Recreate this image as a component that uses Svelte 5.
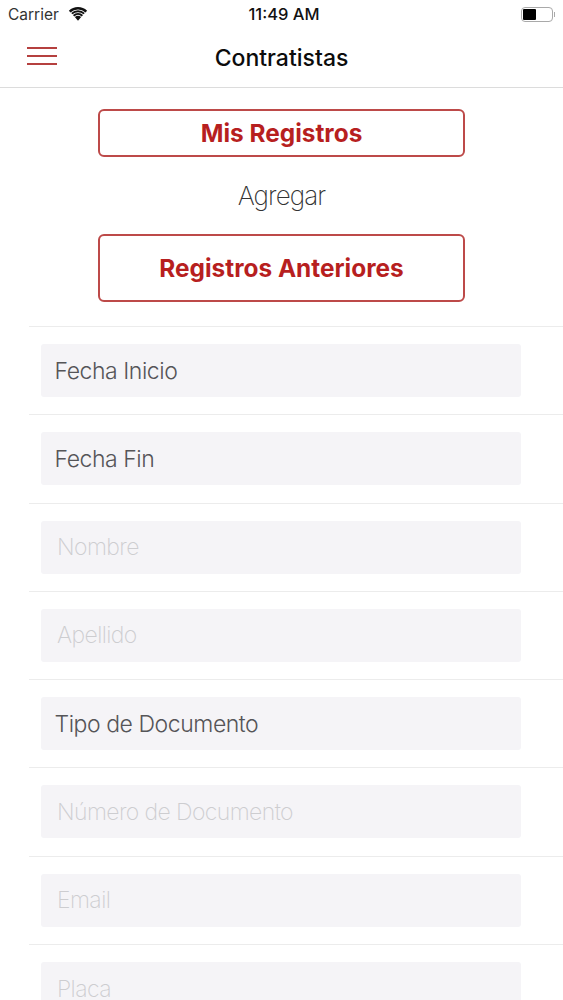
<script>
    const fields = [
        { label: 'Fecha Inicio', filled: true },
        { label: 'Fecha Fin', filled: true },
        { label: 'Nombre', filled: false },
        { label: 'Apellido', filled: false },
        { label: 'Tipo de Documento', filled: true },
        { label: 'Número de Documento', filled: false },
        { label: 'Email', filled: false },
        { label: 'Placa', filled: false }
    ];
</script>

<div class="screen">
    <div class="status">
        <div class="carrier">
            <span>Carrier</span>
            <svg width="20" height="14" viewBox="0 0 20 15">
                <path d="M10 14.8 L6.6 10.8 A5.2 5.2 0 0 1 13.4 10.8 Z" fill="#111" />
                <path d="M4.6 8.6 A8 8 0 0 1 15.4 8.6 L14 10.1 A6 6 0 0 0 6 10.1 Z" fill="#111" />
                <path d="M0.2 3.9 A14.3 14.3 0 0 1 19.8 3.9 L18 5.9 A11.6 11.6 0 0 0 2 5.9 Z" fill="#111" />
                <path d="M2.7 6.4 A10.8 10.8 0 0 1 17.3 6.4 L15.9 7.9 A8.8 8.8 0 0 0 4.1 7.9 Z" fill="#111" />
            </svg>
        </div>
        <div class="time">11:49 AM</div>
        <div class="battery">
            <div class="battery-body"><div class="battery-level"></div></div>
            <div class="battery-tip"></div>
        </div>
    </div>

    <header class="nav">
        <div class="burger">
            <span></span>
            <span></span>
            <span></span>
        </div>
        <div class="title">Contratistas</div>
    </header>

    <div class="actions">
        <button class="btn small">Mis Registros</button>
        <div class="add">Agregar</div>
        <button class="btn large">Registros Anteriores</button>
    </div>

    <div class="form">
        {#each fields as field}
            <div class="row">
                <div class={`field ${field.filled ? 'filled' : 'empty'}`}>{field.label}</div>
            </div>
        {/each}
    </div>
</div>

<style>
    :global(body) {
        margin: 0;
        background: #fff;
    }

    .screen {
        width: 563px;
        height: 1000px;
        overflow: hidden;
        background: #fff;
        font-family: Inter, "Liberation Sans", sans-serif;
    }

    .status {
        height: 28px;
        display: grid;
        grid-template-columns: 1fr auto 1fr;
        align-items: center;
        padding: 0 8px;
        font-size: 15.5px;
        color: #333;
    }

    .carrier {
        display: flex;
        align-items: center;
        gap: 9px;
    }

    .time {
        font-size: 16.5px;
        font-weight: 500;
        color: #111;
        margin-left: 5px;
    }

    .battery {
        display: flex;
        align-items: center;
        justify-content: flex-end;
        gap: 1px;
    }

    .battery-body {
        width: 32px;
        height: 15px;
        box-sizing: border-box;
        border: 1.5px solid #a9a9a9;
        border-radius: 4px;
        padding: 1px;
    }

    .battery-level {
        width: 13px;
        height: 100%;
        background: #000;
        border-radius: 1px;
    }

    .battery-tip {
        width: 1.5px;
        height: 5px;
        background: #aaa;
    }

    .nav {
        height: 59px;
        display: flex;
        align-items: center;
        justify-content: center;
        position: relative;
        border-bottom: 1px solid #dcdcdc;
    }

    .burger {
        position: absolute;
        left: 27px;
        top: 19px;
        width: 30px;
        display: flex;
        flex-direction: column;
        gap: 6px;
    }

    .burger span {
        height: 2px;
        background: #b5403f;
    }

    .title {
        font-size: 23px;
        font-weight: 500;
        color: #0c0c0c;
    }

    .actions {
        display: flex;
        flex-direction: column;
        align-items: center;
        padding-top: 21px;
    }

    .btn {
        width: 367px;
        box-sizing: border-box;
        background: #fff;
        border: 2px solid #bd4a49;
        border-radius: 6px;
        color: #b71f1f;
        font-family: inherit;
        font-size: 24.4px;
        font-weight: 700;
        padding: 0;
    }

    .btn.small {
        height: 48px;
    }

    .btn.large {
        height: 68px;
    }

    .add {
        height: 77px;
        display: flex;
        align-items: center;
        font-size: 26px;
        font-weight: 200;
        letter-spacing: -0.9px;
        color: #333;
    }

    .form {
        margin-top: 24px;
        margin-left: 29px;
    }

    .row {
        height: 88.3px;
        box-sizing: border-box;
        border-top: 1px solid #ececec;
        padding: 17px 42px 0 12px;
    }

    .field {
        height: 53px;
        background: #f5f4f7;
        border-radius: 3px;
        display: flex;
        align-items: center;
        font-size: 23px;
        font-weight: 300;
        letter-spacing: -0.45px;
    }

    .field.filled {
        padding-left: 13.5px;
        color: #555558;
    }

    .field.empty {
        padding-left: 16px;
        color: #cdcdd0;
        font-weight: 200;
        letter-spacing: -0.6px;
    }
</style>
